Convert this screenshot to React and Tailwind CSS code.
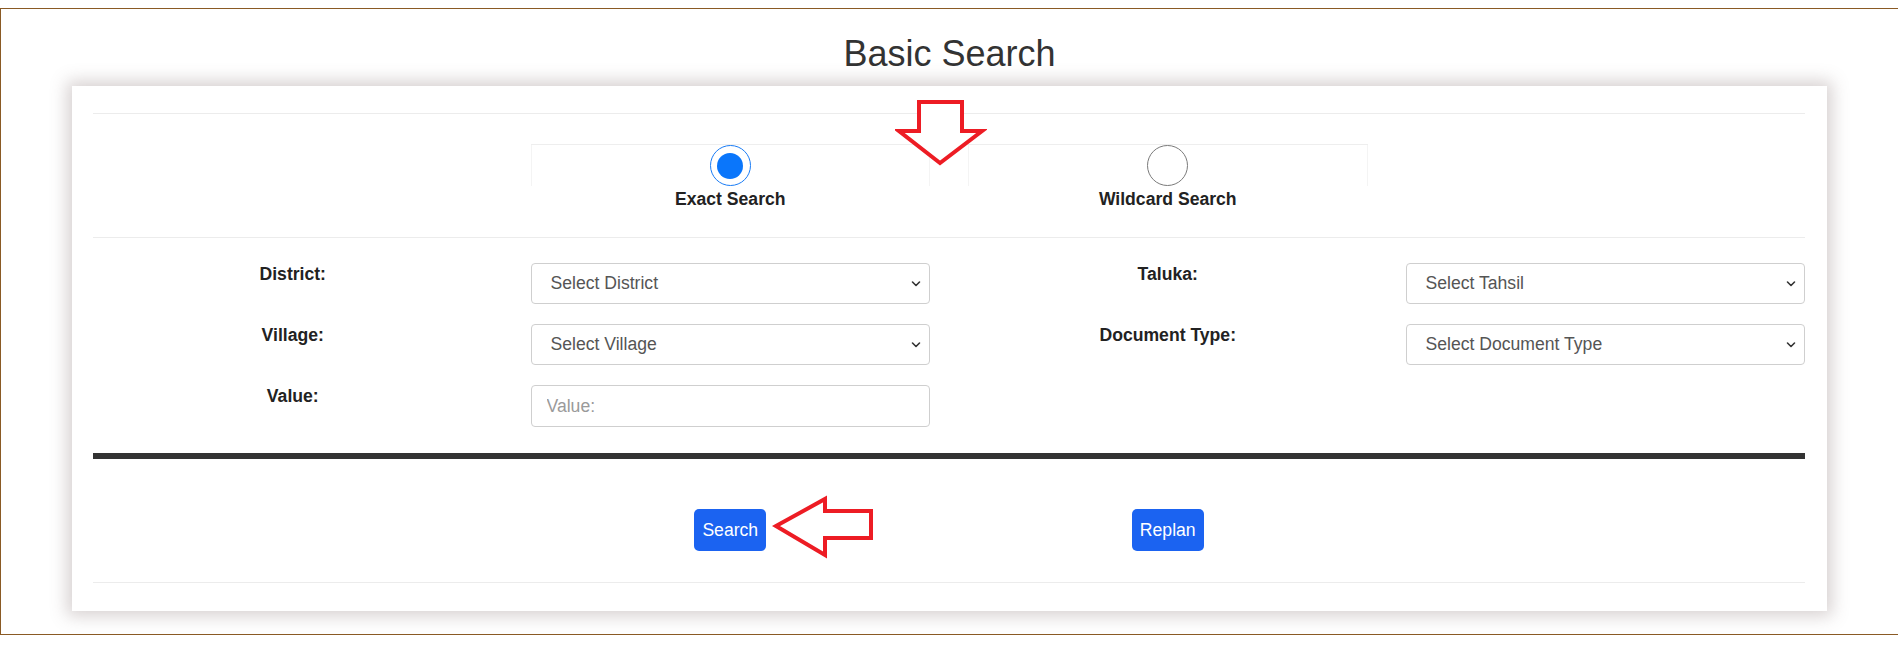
const font = { fontFamily: '"Liberation Sans", Arial, Helvetica, sans-serif' };

function Chevron() {
  return (
    <svg className="pointer-events-none absolute right-[9px] top-1/2 -translate-y-1/2" width="10" height="7" viewBox="0 0 10 7" fill="none">
      <path d="M1.5 1.5l3.5 3.5 3.5-3.5" stroke="#333" strokeWidth="1.6" strokeLinecap="round" strokeLinejoin="round" />
    </svg>
  );
}

function SelectBox({ placeholder }) {
  return (
    <div className="relative">
      <select
        defaultValue=""
        className="h-[41px] w-full appearance-none rounded-[4px] border border-[#cfcfcf] bg-white pl-[19px] pr-8 text-[17.6px] text-[#555] outline-none"
        style={font}
      >
        <option value="">{placeholder}</option>
      </select>
      <Chevron />
    </div>
  );
}

function Label({ children }) {
  return (
    <div className="-mt-[2px] text-center text-[17.6px] font-bold leading-[26px] text-[#222]">
      {children}
    </div>
  );
}

function Radio({ checked }) {
  if (checked) {
    return (
      <div className="flex h-[41px] w-[41px] items-center justify-center rounded-full border-[1.5px] border-[#1a7cf5] bg-white">
        <div className="h-[26px] w-[26px] rounded-full bg-[#0a76fb]" />
      </div>
    );
  }
  return <div className="h-[41px] w-[41px] rounded-full border-[1.5px] border-[#7a7a7a] bg-white" />;
}

function SearchCard() {
  return (
    <div className="relative ml-[71px] mt-[11px] w-[1755px] bg-white pl-[21px] pr-[22px] pb-[28px] pt-[27px] shadow-[0_0_16px_5px_rgba(110,90,90,0.28)]">
      <div className="h-px bg-[#ececec]" />

      {/* search mode */}
      <div className="mt-[30px] grid grid-cols-4 gap-x-[38px]">
        <div className="col-span-2 col-start-2 grid grid-cols-2 gap-x-[38px] border-t border-[#eeeeee]">
          <div className="flex flex-col items-center">
            <div className="flex w-full justify-center border-x border-[#f4f4f4]">
              <Radio checked />
            </div>
            <div className="text-[17.6px] font-bold leading-[26px] text-[#222]">Exact Search</div>
          </div>
          <div className="flex flex-col items-center">
            <div className="flex w-full justify-center border-x border-[#f4f4f4]">
              <Radio />
            </div>
            <div className="text-[17.6px] font-bold leading-[26px] text-[#222]">Wildcard Search</div>
          </div>
        </div>
      </div>

      <div className="mt-[25px] h-px bg-[#ececec]" />

      {/* filters */}
      <div className="mt-[25px] grid grid-cols-4 gap-x-[38px] gap-y-[20px]">
        <Label>District:</Label>
        <SelectBox placeholder="Select District" />
        <Label>Taluka:</Label>
        <SelectBox placeholder="Select Tahsil" />

        <Label>Village:</Label>
        <SelectBox placeholder="Select Village" />
        <Label>Document Type:</Label>
        <SelectBox placeholder="Select Document Type" />

        <Label>Value:</Label>
        <input
          placeholder="Value:"
          className="h-[42px] w-full rounded-[4px] border border-[#cfcfcf] px-[15px] text-[17.6px] text-[#555] outline-none placeholder:text-[#9a9a9a]"
          style={font}
        />
      </div>

      <div className="mt-[26px] h-[6px] bg-[#333]" />

      <div className="mt-[50px] grid grid-cols-4 gap-x-[38px]">
        <div className="col-start-2 flex justify-center">
          <button className="h-[42px] rounded-[5px] bg-[#1b63f1] px-[8px] text-[17.6px] text-white" style={font}>
            Search
          </button>
        </div>
        <div className="flex justify-center">
          <button className="h-[42px] rounded-[5px] bg-[#1b63f1] px-[8px] text-[17.6px] text-white" style={font}>
            Replan
          </button>
        </div>
      </div>

      <div className="mt-[31px] h-px bg-[#ececec]" />

      {/* annotation arrows */}
      <svg className="absolute left-[823px] top-[12px]" width="92" height="70" viewBox="0 0 92 70">
        <polygon points="24,4 67,4 67,33 87,33 45,65 4,33 24,33" fill="white" stroke="#ed1c24" strokeWidth="4" />
      </svg>
      <svg className="absolute left-[700px] top-[409px]" width="104" height="64" viewBox="0 0 104 64">
        <polygon points="4,31 53,4 53,16 99,16 99,43 53,43 53,60" fill="white" stroke="#ed1c24" strokeWidth="4" />
      </svg>
    </div>
  );
}

export default function App() {
  return (
    <div className="min-h-screen bg-white pt-[8px]" style={font}>
      <div className="border-y border-l border-[#8a5a24] pb-[23px]">
        <h1 className="mt-[23px] text-center text-[36px] font-normal leading-[43px] text-[#333]">Basic Search</h1>
        <SearchCard />
      </div>
    </div>
  );
}
